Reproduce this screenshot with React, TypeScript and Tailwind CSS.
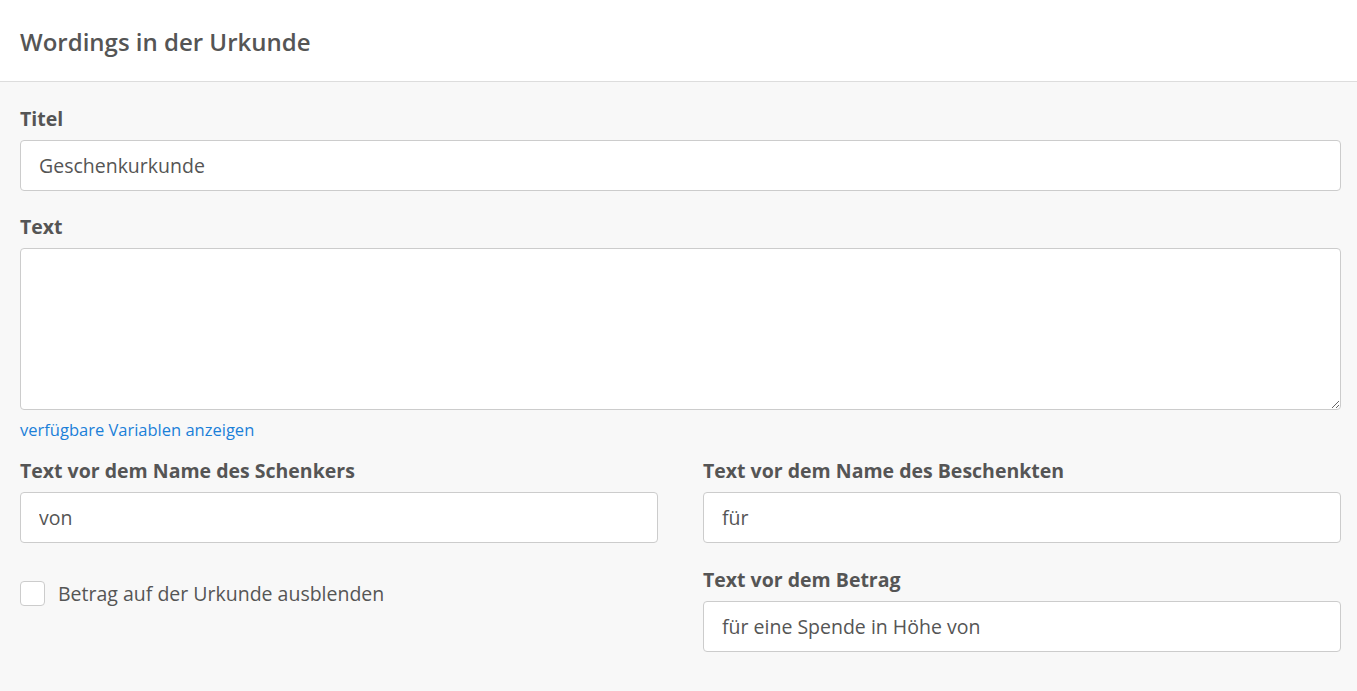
import React from "react";

function Field({ label, value, className = "" }: { label: string; value: string; className?: string }) {
  return (
    <div className={className}>
      <label className="block text-[19.5px] leading-[27px] font-bold text-[#555]">{label}</label>
      <input
        readOnly
        value={value}
        className="mt-[8px] block w-full h-[51px] rounded-[4px] border border-[#cccccc] bg-white px-[18px] text-[19.5px] text-[#555] outline-none"
      />
    </div>
  );
}

export default function App() {
  return (
    <div className="min-h-[691px] bg-[#f8f8f8] text-[#555]" style={{ fontFamily: '"Open Sans", sans-serif' }}>
      <div className="h-[82px] bg-white border-b border-[#dddddd] px-5 flex items-center">
        <h2 className="text-[24px] font-semibold text-[#555] leading-none mt-[2px]">Wordings in der Urkunde</h2>
      </div>
      <div className="pl-5 pr-4 pt-[23px] pb-[39px]">
        <Field label="Titel" value="Geschenkurkunde" />
        <div className="mt-[22px]">
          <label className="block text-[19.5px] leading-[27px] font-bold text-[#555]">Text</label>
          <textarea
            readOnly
            className="mt-[8px] block w-full h-[162px] rounded-[4px] border border-[#cccccc] bg-white px-[18px] py-3 text-[19.5px] text-[#555] outline-none"
          />
          <a className="block mt-[8px] text-[16.5px] leading-[24px] text-[#1b80d8]" href="#">verfügbare Variablen anzeigen</a>
        </div>
        <div className="mt-[15px] grid grid-cols-2 gap-x-[45px]">
          <div>
            <Field label="Text vor dem Name des Schenkers" value="von" />
            <label className="mt-[36px] flex items-center gap-[13px]">
              <span className="w-[25px] h-[25px] rounded-[4px] border border-[#cccccc] bg-white" />
              <span className="text-[19.5px] text-[#555]">Betrag auf der Urkunde ausblenden</span>
            </label>
          </div>
          <div>
            <Field label="Text vor dem Name des Beschenkten" value="für" />
            <Field className="mt-[23px]" label="Text vor dem Betrag" value="für eine Spende in Höhe von" />
          </div>
        </div>
      </div>
    </div>
  );
}
